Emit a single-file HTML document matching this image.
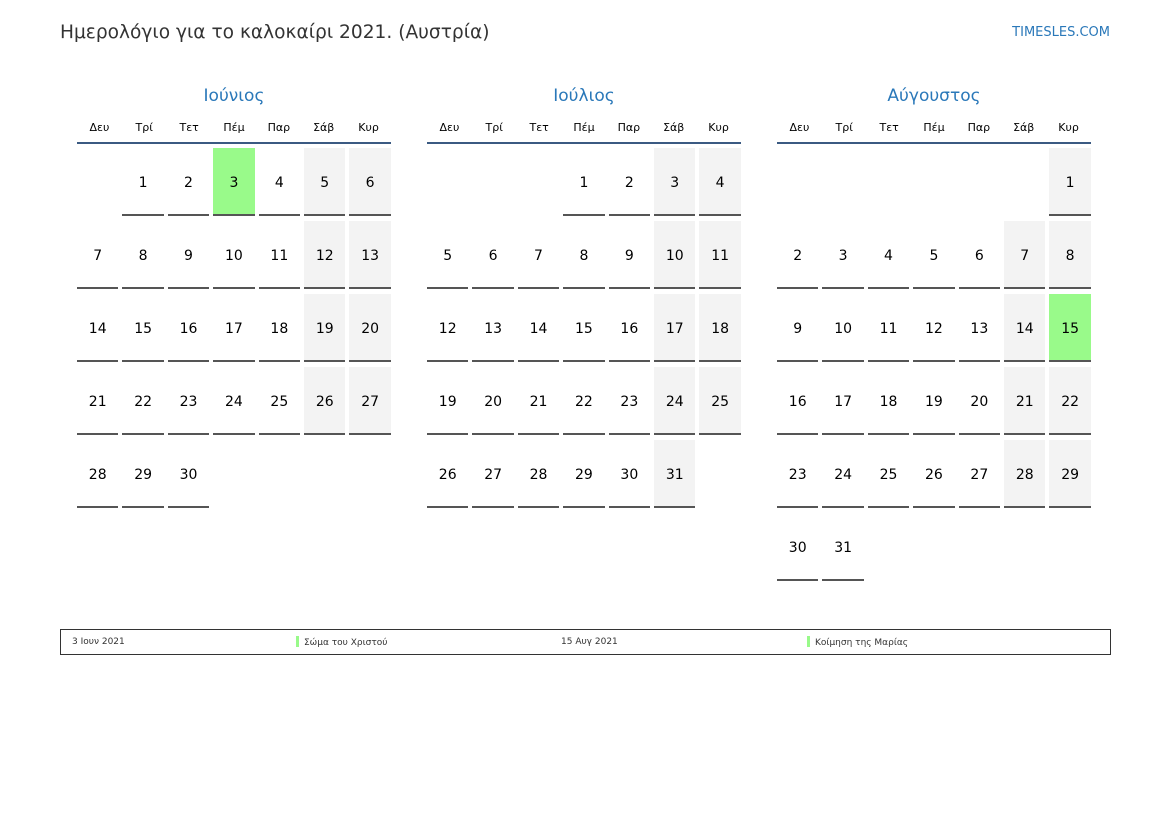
<!DOCTYPE html>
<html><head><meta charset="utf-8"><style>
*{margin:0;padding:0;box-sizing:border-box}
body{width:1169px;height:827px;background:#fff;font-family:"DejaVu Sans","Liberation Sans",sans-serif;position:relative;overflow:hidden;color:#000}
.title{position:absolute;left:60px;top:22px;font-size:18.6px;color:#333}
.site{position:absolute;right:59px;top:25px;font-size:13px;color:#2a78b9}
.m{position:absolute;top:86px;width:314px}
.mt{text-align:center;font-size:17px;color:#2a78b9;height:22px}
.dn{display:grid;grid-template-columns:repeat(7,1fr);font-size:11px;text-align:center;margin-top:10px;height:26px;line-height:18px;padding-top:1px;border-bottom:2px solid #3b5a82}
.g{display:grid;grid-template-columns:repeat(7,41.4px);column-gap:4.03px;grid-auto-rows:68px;row-gap:5px;margin-top:4px}
.g div{font-size:14px;display:flex;align-items:center;justify-content:center;padding-top:4px;border-bottom:2px solid #555}
.g .e{border:none}
.g .w{background:#f3f3f3}
.g .h{background:#99fa8a}
.leg{position:absolute;left:60px;top:629px;width:1051px;height:26px;border:1px solid #333;font-size:9px;color:#333}
.leg span{position:absolute;top:6px;line-height:12px}
.bar{display:inline-block;width:3px;height:11px;background:#99fa8a;vertical-align:-2px;margin-right:5px}
</style></head><body>
<div class="title">Ημερολόγιο για το καλοκαίρι 2021. (Αυστρία)</div>
<div class="site">TIMESLES.COM</div>

<div class="m" style="left:77px">
<div class="mt">Ιούνιος</div>
<div class="dn"><span>Δευ</span><span>Τρί</span><span>Τετ</span><span>Πέμ</span><span>Παρ</span><span>Σάβ</span><span>Κυρ</span></div>
<div class="g">
<div class="e"></div><div>1</div><div>2</div><div class="h">3</div><div>4</div><div class="w">5</div><div class="w">6</div>
<div>7</div><div>8</div><div>9</div><div>10</div><div>11</div><div class="w">12</div><div class="w">13</div>
<div>14</div><div>15</div><div>16</div><div>17</div><div>18</div><div class="w">19</div><div class="w">20</div>
<div>21</div><div>22</div><div>23</div><div>24</div><div>25</div><div class="w">26</div><div class="w">27</div>
<div>28</div><div>29</div><div>30</div>
</div></div>

<div class="m" style="left:427px">
<div class="mt">Ιούλιος</div>
<div class="dn"><span>Δευ</span><span>Τρί</span><span>Τετ</span><span>Πέμ</span><span>Παρ</span><span>Σάβ</span><span>Κυρ</span></div>
<div class="g">
<div class="e"></div><div class="e"></div><div class="e"></div><div>1</div><div>2</div><div class="w">3</div><div class="w">4</div>
<div>5</div><div>6</div><div>7</div><div>8</div><div>9</div><div class="w">10</div><div class="w">11</div>
<div>12</div><div>13</div><div>14</div><div>15</div><div>16</div><div class="w">17</div><div class="w">18</div>
<div>19</div><div>20</div><div>21</div><div>22</div><div>23</div><div class="w">24</div><div class="w">25</div>
<div>26</div><div>27</div><div>28</div><div>29</div><div>30</div><div class="w">31</div>
</div></div>

<div class="m" style="left:777px">
<div class="mt">Αύγουστος</div>
<div class="dn"><span>Δευ</span><span>Τρί</span><span>Τετ</span><span>Πέμ</span><span>Παρ</span><span>Σάβ</span><span>Κυρ</span></div>
<div class="g">
<div class="e"></div><div class="e"></div><div class="e"></div><div class="e"></div><div class="e"></div><div class="e"></div><div class="w">1</div>
<div>2</div><div>3</div><div>4</div><div>5</div><div>6</div><div class="w">7</div><div class="w">8</div>
<div>9</div><div>10</div><div>11</div><div>12</div><div>13</div><div class="w">14</div><div class="h">15</div>
<div>16</div><div>17</div><div>18</div><div>19</div><div>20</div><div class="w">21</div><div class="w">22</div>
<div>23</div><div>24</div><div>25</div><div>26</div><div>27</div><div class="w">28</div><div class="w">29</div>
<div>30</div><div>31</div>
</div></div>

<div class="leg">
<span style="left:11px">3 Ιουν 2021</span>
<span style="left:235px"><i class="bar"></i>Σώμα του Χριστού</span>
<span style="left:500px">15 Αυγ 2021</span>
<span style="left:746px"><i class="bar"></i>Κοίμηση της Μαρίας</span>
</div>
</body></html>
